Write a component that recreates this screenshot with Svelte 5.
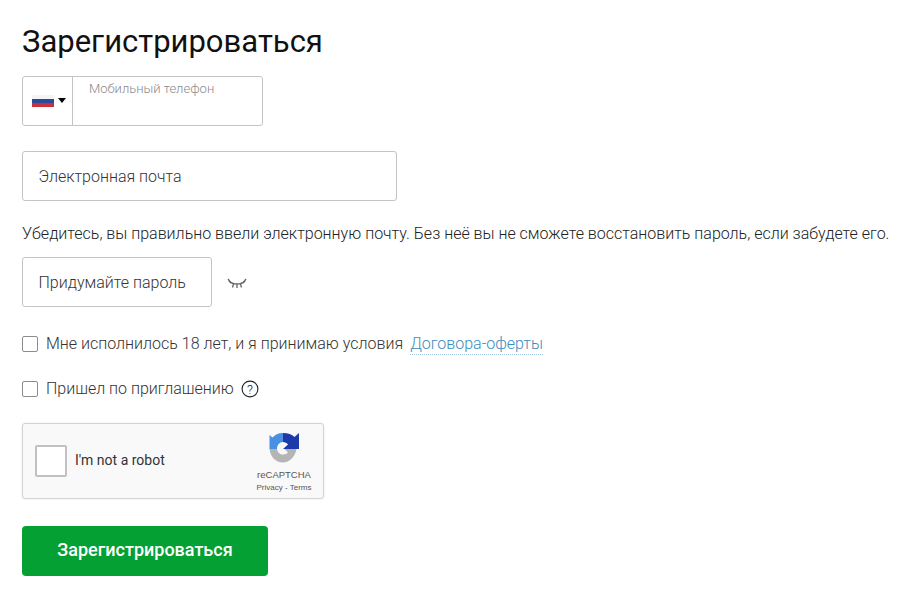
<script>
	let title = 'Зарегистрироваться';
</script>

<div class="page">
	<h1>{title}</h1>

	<div class="phone">
		<div class="country">
			<svg class="flag" width="22" height="12" viewBox="0 0 22 12">
				<rect width="22" height="4" fill="#f4f4f4" />
				<rect y="4" width="22" height="4" fill="#2b4a9b" />
				<rect y="8" width="22" height="4" fill="#c9303c" />
			</svg>
			<span class="caret"></span>
		</div>
		<div class="phone-label">Мобильный телефон</div>
	</div>

	<div class="field email">Электронная почта</div>

	<p class="note">Убедитесь, вы правильно ввели электронную почту. Без неё вы не сможете восстановить пароль, если забудете его.</p>

	<div class="password-row">
		<div class="field password">Придумайте пароль</div>
		<svg class="eye" width="20" height="12" viewBox="0 0 20 12" fill="none" stroke="#666" stroke-width="1.300">
			<path d="M2 3C6 7 14 7 18 3" />
			<path d="M1 1L4 5M6.500 6L5.500 9.500M10 6.500V10M13.500 6L14.500 9.500M16 5L19 1" />
		</svg>
	</div>

	<label class="check first">
		<span class="box"></span>
		<span>Мне исполнилось 18 лет, и я принимаю условия</span>
		<span class="link">Договора-оферты</span>
	</label>

	<label class="check second">
		<span class="box"></span>
		<span>Пришел по приглашению</span>
		<svg class="help" width="18" height="18" viewBox="0 0 18 18">
			<circle cx="9" cy="9" r="7.900" fill="none" stroke="#222" stroke-width="1.100" />
			<text x="9" y="13.500" text-anchor="middle" font-size="13" font-family="Roboto, sans-serif" fill="#222">?</text>
		</svg>
	</label>

	<div class="captcha">
		<span class="captcha-box"></span>
		<span class="captcha-text">I'm not a robot</span>
		<div class="captcha-logo">
			<svg width="32" height="31" viewBox="0 0 32 31">
				<path d="M15 0C20 0 24 1.500 26.500 4L31 0V16H15L20 11.500C19 10 17 9 15 9Z" fill="#1c3aa9" />
				<path d="M15 0C10 0 7 2 4.500 4.500L1.500 2V16H9C9 12 11.500 9 15 9Z" fill="#4a90e2" />
				<path d="M1.500 16H9C9.500 19.500 12 21.500 15 21.500C17 21.500 19 20.500 20 19.500L16.500 16H28.500C27 24 21.500 29.500 15 29.500C7.500 29.500 2.500 24 1.500 16Z" fill="#b5b5b5" />
			</svg>
			<div class="brand">reCAPTCHA</div>
			<div class="terms">Privacy - Terms</div>
		</div>
	</div>

	<button class="submit">{title}</button>
</div>

<style>
	:global(body) {
		background: #fff;
	}
	.page {
		width: 904px;
		height: 599px;
		box-sizing: border-box;
		padding: 23px 0 0 22px;
		font-family: Roboto, sans-serif;
		font-weight: 300;
		color: #333;
		overflow: hidden;
	}
	h1 {
		margin: 0;
		font-size: 31px;
		line-height: 38px;
		font-weight: 400;
		color: #111;
	}
	.phone {
		display: flex;
		width: 241px;
		height: 50px;
		margin-top: 15px;
		box-sizing: border-box;
		border: 1px solid #c4c4c4;
		border-radius: 3px;
	}
	.country {
		display: flex;
		align-items: center;
		gap: 4px;
		width: 50px;
		box-sizing: border-box;
		padding: 0 0 0 9px;
		border-right: 1px solid #c4c4c4;
	}
	.caret {
		width: 0;
		height: 0;
		margin-top: -2px;
		border-left: 4px solid transparent;
		border-right: 4px solid transparent;
		border-top: 5px solid #000;
	}
	.phone-label {
		padding: 5px 0 0 16px;
		font-size: 13px;
		line-height: 14px;
		color: #8a8a8a;
	}
	.field {
		display: flex;
		align-items: center;
		height: 50px;
		box-sizing: border-box;
		padding-left: 15.500px;
		border: 1px solid #c4c4c4;
		border-radius: 3px;
		font-size: 16px;
		color: #333;
	}
	.email {
		width: 375px;
		margin-top: 25px;
	}
	.note {
		margin: 23px 0 0;
		font-size: 16px;
		line-height: 20px;
		white-space: nowrap;
		color: #222;
	}
	.password-row {
		display: flex;
		align-items: center;
		gap: 15px;
		margin-top: 13px;
	}
	.password {
		width: 190px;
	}
	.eye {
		margin-top: 3px;
	}
	.check {
		display: flex;
		align-items: center;
		font-size: 16px;
		line-height: 22px;
		color: #333;
	}
	.first {
		margin-top: 26px;
	}
	.second {
		margin-top: 23px;
	}
	.box {
		width: 14px;
		height: 14px;
		margin-right: 8px;
		border: 1px solid #8c8c8c;
		border-radius: 2px;
	}
	.link {
		margin-left: 7px;
		color: #3c8dbc;
		border-bottom: 1px dotted #9cc5dc;
		line-height: 20px;
	}
	.help {
		margin-left: 7px;
	}
	.captcha {
		display: flex;
		align-items: center;
		width: 302px;
		height: 76px;
		margin-top: 23px;
		box-sizing: border-box;
		padding-left: 12px;
		background: #f9f9f9;
		border: 1px solid #d3d3d3;
		border-radius: 3px;
		box-shadow: 0 0 3px rgba(0, 0, 0, 0.08);
	}
	.captcha-box {
		width: 28px;
		height: 28px;
		flex-shrink: 0;
		background: #fff;
		border: 2px solid #c1c1c1;
		border-radius: 2px;
	}
	.captcha-text {
		margin-left: 8px;
		margin-top: -2px;
		font-size: 14px;
		font-weight: 400;
		color: #333;
	}
	.captcha-logo {
		display: flex;
		flex-direction: column;
		align-items: center;
		margin-left: auto;
		margin-right: 4px;
		width: 70px;
		padding-top: 4px;
	}
	.brand {
		margin-top: 5px;
		font-family: "Liberation Sans", sans-serif;
		font-weight: 400;
		font-size: 9.500px;
		line-height: 12px;
		color: #555;
	}
	.terms {
		margin-top: 2px;
		font-family: "Liberation Sans", sans-serif;
		font-weight: 400;
		font-size: 8px;
		line-height: 10px;
		color: #555;
	}
	.submit {
		display: block;
		width: 246px;
		height: 50px;
		margin-top: 27px;
		padding-bottom: 4px;
		background: #04a033;
		border: 0;
		border-radius: 4px;
		color: #fff;
		font-family: Roboto, sans-serif;
		font-size: 18px;
		font-weight: 500;
	}
</style>
